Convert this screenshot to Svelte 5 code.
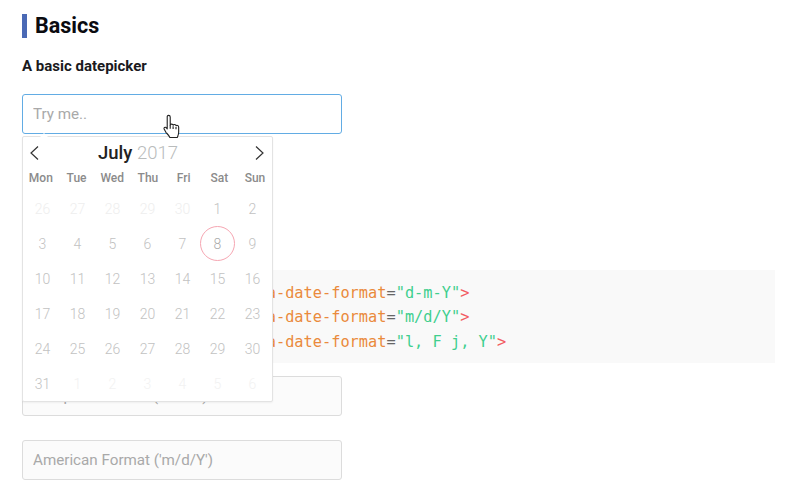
<script>
  const weekdays = ["Mon", "Tue", "Wed", "Thu", "Fri", "Sat", "Sun"];

  const before = [26, 27, 28, 29, 30];
  const after = [1, 2, 3, 4, 5, 6];
  const month = Array.from({ length: 31 }, (_, i) => i + 1);

  const days = [
    ...before.map((n) => ({ n, kind: "other" })),
    ...month.map((n) => ({ n, kind: "cur" })),
    ...after.map((n) => ({ n, kind: "next" }))
  ];

  const lines = [
    { pre: '<input id="date-pick" dat', rest: "a-date-format", value: '"d-m-Y"' },
    { pre: '<input id="date-pick" dat', rest: "a-date-format", value: '"m/d/Y"' },
    { pre: '<input id="date-pick" dat', rest: "a-date-format", value: '"l, F j, Y"' }
  ];
</script>

<main class="page">
  <h2 class="title">Basics</h2>
  <h4 class="sub">A basic datepicker</h4>

  <div class="picker">
    <input class="field active" type="text" placeholder="Try me.." />

    <div class="calendar">
      <div class="head">
        <svg class="arrow" viewBox="0 0 12 16" width="12" height="16">
          <path d="M10 1.5 3 8l7 6.5" />
        </svg>
        <span class="month"><b>July</b> <span class="year">2017</span></span>
        <svg class="arrow" viewBox="0 0 12 16" width="12" height="16">
          <path d="M2 1.5 9 8l-7 6.5" />
        </svg>
      </div>
      <div class="weekdays">
        {#each weekdays as day}
          <span>{day}</span>
        {/each}
      </div>
      <div class="days">
        {#each days as day}
          <span class="day {day.kind}" class:today={day.kind === "cur" && day.n === 8}>{day.n}</span>
        {/each}
      </div>
    </div>

    <svg class="cursor" viewBox="0 0 18 24" width="20" height="26.700">
      <path
        d="M5 1.200c1 0 1.500.7 1.500 1.600v7c.3-1 2.400-1 2.600.3.4-.9 2.400-.9 2.600.5.6-.7 2.400-.4 2.400 1.100v4.800c0 2-.6 3-1.300 4.700H6.200c-.8-2-2-3-3.600-4.700L1 13.500c-.5-1.200.8-2 1.800-1.300l1 1.100V2.800C3.700 1.900 4.100 1.200 5 1.200Z"
      />
      <path class="crease" d="M6.500 9.800v3.500M9.100 11v2.600M11.700 11.600v2.200" />
    </svg>
  </div>

  <pre class="code">{#each lines as line}<code><span class="attr">{line.pre}{line.rest}</span><span class="eq">=</span><span class="str">{line.value}</span><span class="tag">&gt;</span></code>
{/each}</pre>

  <input class="field" type="text" placeholder="European Format ('d-m-Y')" />
  <input class="field" type="text" placeholder="American Format ('m/d/Y')" />
</main>

<style>
  :global(body) {
    margin: 0;
    background: #fff;
    overflow: hidden;
  }

  .page {
    box-sizing: border-box;
    height: 493px;
    overflow: hidden;
    padding: 14px 16px 0 22px;
    font-family: Roboto, "Liberation Sans", sans-serif;
    color: #111;
  }

  .title {
    margin: 0;
    padding-left: 8px;
    border-left: 5px solid #4a69b5;
    font-size: 21.500px;
    font-weight: 700;
    line-height: 24px;
    color: #0b0b10;
  }

  .sub {
    margin: 20px 0 0;
    font-size: 15px;
    font-weight: 700;
    line-height: 17px;
    color: #1a1a20;
  }

  .picker {
    position: relative;
    margin-top: 19px;
  }

  .field {
    display: block;
    box-sizing: border-box;
    width: 320px;
    height: 40px;
    padding: 0 10px;
    border: 1px solid #dcdcdc;
    border-radius: 3px;
    background: #fbfbfb;
    font-family: inherit;
    font-size: 15.200px;
    outline: none;
  }

  .field::placeholder {
    color: #a9a9a9;
  }

  .field.active {
    border-color: #62ace4;
    background: #fff;
  }

  .field + .field {
    margin-top: 24px;
  }

  .calendar {
    position: absolute;
    top: 42px;
    left: 0;
    box-sizing: border-box;
    width: 251px;
    height: 266px;
    padding-top: 4px;
    border: 1px solid #e3e3e3;
    border-radius: 2px;
    background: #fff;
    box-shadow: 0 1px 2px rgba(0, 0, 0, 0.05);
    z-index: 2;
  }

  .calendar::before {
    content: "";
    position: absolute;
    top: -4px;
    left: 17px;
    border: 4px solid transparent;
    border-top: 0;
    border-bottom-color: #fff;
  }

  .head {
    display: flex;
    align-items: center;
    justify-content: space-between;
    height: 24px;
    padding: 0 6px 0 5px;
  }

  .arrow {
    fill: none;
    stroke: #333;
    stroke-width: 1.200;
  }

  .month {
    font-size: 18.500px;
    color: #222;
    margin-right: 18px;
  }

  .month b {
    font-weight: 500;
  }

  .year {
    font-weight: 300;
    color: #b9bcbc;
  }

  .weekdays,
  .days {
    display: grid;
    justify-items: center;
  }

  .weekdays {
    grid-template-columns: repeat(7, 35.700px);
    margin-top: 2px;
    height: 22px;
    align-items: center;
    font-size: 12px;
    font-weight: 500;
    color: #8b8b8b;
  }

  .days {
    grid-template-columns: repeat(7, 35px);
    grid-auto-rows: 35px;
    margin-top: 2px;
    padding-left: 2px;
    font-size: 14px;
    font-weight: 300;
  }

  .day {
    display: flex;
    align-items: center;
    justify-content: center;
    box-sizing: border-box;
    width: 35px;
    height: 35px;
    border-radius: 50%;
  }

  .cur {
    color: #c2c2c2;
  }

  .other {
    color: #eeeeee;
  }

  .next {
    color: #f2f2f2;
  }

  .today {
    border: 1px solid #f6a6b2;
    color: #aaa;
  }

  .cursor {
    position: absolute;
    top: 20px;
    left: 141px;
    z-index: 3;
    overflow: visible;
  }

  .cursor path {
    fill: #fff;
    stroke: #222;
    stroke-width: 1;
    stroke-linejoin: round;
  }

  .cursor .crease {
    fill: none;
  }

  .code {
    box-sizing: border-box;
    height: 93px;
    margin: 136px 0 13px;
    padding: 11px 14.500px;
    background: #f9f9f9;
    font-family: "DejaVu Sans Mono", "Liberation Mono", monospace;
    font-size: 15.300px;
    line-height: 24.400px;
    overflow: hidden;
  }

  .attr {
    color: #ea8a3c;
  }

  .eq {
    color: #666;
  }

  .str {
    color: #3fcf8e;
  }

  .tag {
    color: #f25c62;
  }
</style>
